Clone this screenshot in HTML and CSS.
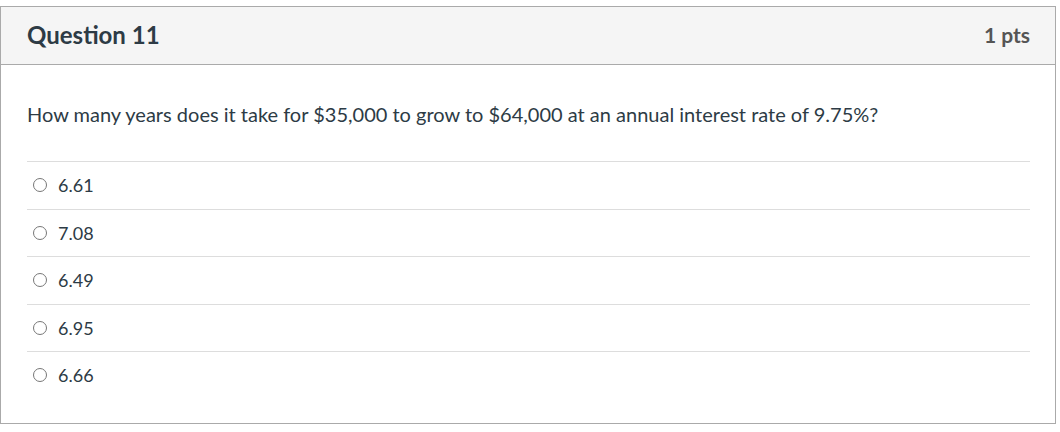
FILE: index.html
```html
<!DOCTYPE html>
<html>
<head>
<meta charset="utf-8">
<link rel="stylesheet" href="styles.css">
</head>
<body>
<div class="question">
  <div class="header">
    <span class="title">Question 11</span>
    <span class="pts">1 pts</span>
  </div>
  <div class="content">
    <p class="text">How many years does it take for $35,000 to grow to $64,000 at an annual interest rate of 9.75%?</p>
    <div class="answers">
      <div class="answer"><span class="radio"></span><span class="label">6.61</span></div>
      <div class="answer"><span class="radio"></span><span class="label">7.08</span></div>
      <div class="answer"><span class="radio"></span><span class="label">6.49</span></div>
      <div class="answer"><span class="radio"></span><span class="label">6.95</span></div>
      <div class="answer"><span class="radio"></span><span class="label">6.66</span></div>
    </div>
  </div>
</div>
</body>
</html>
```
FILE: styles.css
```css
html, body { margin: 0; padding: 0; background: #fff; }
body { padding-top: 6px; font-family: Lato, "Liberation Sans", sans-serif; color: #2d3b45; }
.question {
  width: 1054px;
  border: 1px solid #aaaaaa;
}
.header {
  background: #f5f5f5;
  border-bottom: 1px solid #aaaaaa;
  height: 57px;
  display: flex;
  align-items: center;
  justify-content: space-between;
  padding: 0 25px 0 26px;
}
.title { font-size: 24px; font-weight: 700; color: #2d3b45; margin-top: -3px; }
.pts { font-size: 21px; font-weight: 700; color: #555; margin-top: -3px; }
.content { padding: 36px 25px 24px 26px; }
.text { margin: 0; font-size: 20px; line-height: 26px; color: #2d3b45; }
.answers { margin-top: 34px; }
.answer {
  border-top: 1px solid #dddddd;
  height: 46.5px;
  display: flex;
  align-items: center;
}
.radio {
  width: 12px; height: 12px;
  border: 1.5px solid #777;
  border-radius: 50%;
  margin-left: 6px;
  margin-right: 11px;
}
.label { font-size: 18px; color: #2d3b45; }
```
